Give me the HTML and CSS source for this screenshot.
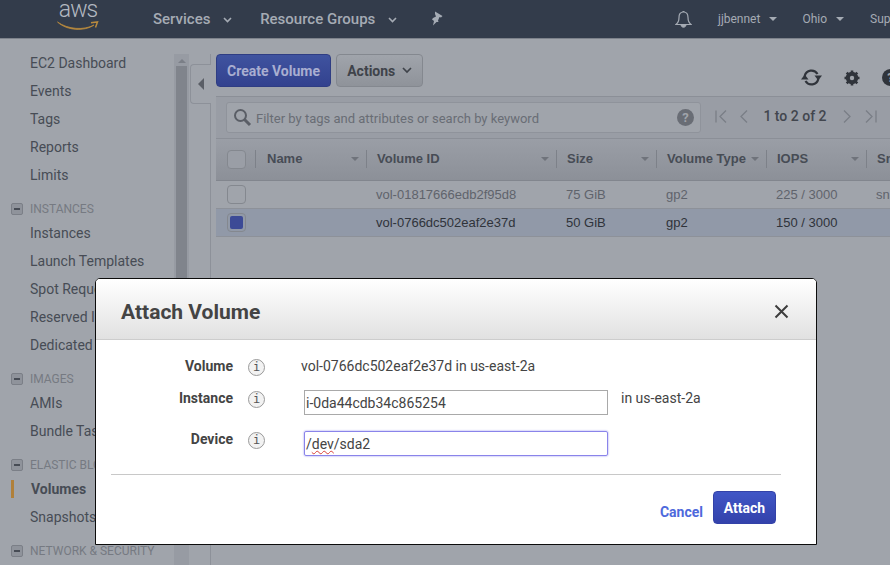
FILE: index.html
```html
<!DOCTYPE html>
<html lang="en">
<head>
  <meta charset="UTF-8">
  <title>Volumes | EC2 Management Console</title>
  <link rel="stylesheet" href="styles.css">
</head>
<body>
  <header class="topbar">
    <div class="logo">
      <span class="logo-text">aws</span>
      <svg class="logo-smile" width="42" height="10" viewBox="0 0 42 10"><path d="M0.500 1 C11 8.500 27 9.500 37 4 C28 10.500 10 10 0.500 1 Z" fill="#b98a3e" stroke="#b98a3e" stroke-width="0.800"/><path d="M34 1.800 L40.500 1 L38.500 6.500" fill="none" stroke="#b98a3e" stroke-width="1.500"/></svg>
    </div>
    <a class="nav-main nav-services">Services <svg class="chev" width="9" height="6" viewBox="0 0 9 6"><path d="M1 1 L4.500 4.500 L8 1" fill="none" stroke="#a5abb4" stroke-width="1.600"/></svg></a>
    <a class="nav-main nav-groups">Resource Groups <svg class="chev" width="9" height="6" viewBox="0 0 9 6"><path d="M1 1 L4.500 4.500 L8 1" fill="none" stroke="#a5abb4" stroke-width="1.600"/></svg></a>
    <svg class="pin" width="14" height="15" viewBox="0 0 14 15"><path d="M5 0.500 L12.500 5 L11 6.500 L9.500 6 L8 9.500 L8.500 11 L6.500 11 L3 14.500 L4 10 L2 8.500 L3 7 L6 5.500 L5 3 Z" fill="#a5abb4"/></svg>
    <svg class="bell" width="17" height="19" viewBox="0 0 17 19"><path d="M8.500 2 C5 2 4 4.500 4 7.500 C4 11 3 13 1 14.500 L16 14.500 C14 13 13 11 13 7.500 C13 4.500 12 2 8.500 2 Z" fill="none" stroke="#a5abb4" stroke-width="1.200"/><path d="M6 15 C6.500 18 10.500 18 11 15 Z M7.500 1.500 L9.500 1.500" fill="#a5abb4" stroke="#a5abb4"/></svg>
    <a class="nav-small nav-user">jjbennet <i class="caret"></i></a>
    <a class="nav-small nav-region">Ohio <i class="caret"></i></a>
    <a class="nav-small nav-support">Support</a>
  </header>

  <div class="content">
    <nav class="sidenav">
      <div class="menu">
        <a class="menu-item">EC2 Dashboard</a>
        <a class="menu-item">Events</a>
        <a class="menu-item">Tags</a>
        <a class="menu-item">Reports</a>
        <a class="menu-item">Limits</a>
        <div class="menu-head"><i class="minus"></i>INSTANCES</div>
        <a class="menu-item">Instances</a>
        <a class="menu-item">Launch Templates</a>
        <a class="menu-item">Spot Requests</a>
        <a class="menu-item">Reserved Instances</a>
        <a class="menu-item">Dedicated Hosts</a>
        <div class="menu-head"><i class="minus"></i>IMAGES</div>
        <a class="menu-item">AMIs</a>
        <a class="menu-item">Bundle Tasks</a>
        <div class="menu-head"><i class="minus"></i>ELASTIC BLOCK STORE</div>
        <a class="menu-item menu-active">Volumes</a>
        <a class="menu-item">Snapshots</a>
        <div class="menu-head"><i class="minus"></i>NETWORK &amp; SECURITY</div>
      </div>
      <div class="scrollbar">
        <div class="scroll-up"></div>
        <div class="scroll-thumb"></div>
      </div>
    </nav>

    <div class="collapse-col">
      <div class="collapse-tab"><i class="arrow-left"></i></div>
    </div>

    <main class="main">
      <div class="toolbar">
        <button class="btn btn-primary">Create Volume</button>
        <button class="btn btn-default">Actions <svg class="chev-actions" width="10" height="7" viewBox="0 0 10 7"><path d="M1 1 L5 5 L9 1" fill="none" stroke="#3f434a" stroke-width="1.700"/></svg></button>
        <div class="tool-icons">
          <svg class="tool-refresh" width="21" height="17" viewBox="0 0 21 17"><path d="M3.700 7 A7 7 0 0 1 16.500 5" fill="none" stroke="#30343b" stroke-width="2.200"/><path d="M13.500 6.500 L21 6.500 L17.300 11.500 Z" fill="#30343b"/><path d="M17.300 10 A7 7 0 0 1 4.500 12" fill="none" stroke="#30343b" stroke-width="2.200"/><path d="M0 10.500 L7.500 10.500 L3.700 5.500 Z" fill="#30343b"/></svg>
          <svg width="16" height="16" viewBox="0 0 16 16"><circle cx="8" cy="8" r="4.500" fill="none" stroke="#30343b" stroke-width="3.400"/><path d="M8 0.500 V15.500 M0.500 8 H15.500 M2.700 2.700 L13.300 13.300 M13.300 2.700 L2.700 13.300" stroke="#30343b" stroke-width="2.600"/><circle cx="8" cy="8" r="2.200" fill="#a0a4ab"/></svg>
          <span class="tool-help">?</span>
        </div>
      </div>

      <div class="filterbar">
        <div class="search">
          <svg class="search-icon" width="19" height="19" viewBox="0 0 19 19"><circle cx="7.500" cy="7.500" r="5.500" fill="none" stroke="#5a5e66" stroke-width="2"/><path d="M11.500 11.500 L17 17" stroke="#5a5e66" stroke-width="3"/></svg>
          <span class="search-text">Filter by tags and attributes or search by keyword</span>
          <span class="search-help">?</span>
        </div>
        <div class="pager">
          <svg width="12" height="13" viewBox="0 0 12 13"><path d="M1 0.500 V12.500 M11 0.500 L5 6.500 L11 12.500" fill="none" stroke="#7a7e86" stroke-width="1.300"/></svg>
          <svg class="pager-prev" width="8" height="13" viewBox="0 0 8 13"><path d="M7 0.500 L1 6.500 L7 12.500" fill="none" stroke="#7a7e86" stroke-width="1.300"/></svg>
          <span class="pager-text">1 to 2 of 2</span>
          <svg class="pager-next" width="8" height="13" viewBox="0 0 8 13"><path d="M1 0.500 L7 6.500 L1 12.500" fill="none" stroke="#7a7e86" stroke-width="1.300"/></svg>
          <svg width="12" height="13" viewBox="0 0 12 13"><path d="M11 0.500 V12.500 M1 0.500 L7 6.500 L1 12.500" fill="none" stroke="#7a7e86" stroke-width="1.300"/></svg>
        </div>
      </div>

      <div class="grid-head">
        <div class="col-check"><i class="check"></i></div>
        <div class="col col-name">Name<i class="sort"></i></div>
        <div class="col col-id">Volume ID<i class="sort"></i></div>
        <div class="col col-size">Size<i class="sort"></i></div>
        <div class="col col-type">Volume Type<i class="sort"></i></div>
        <div class="col col-iops">IOPS<i class="sort"></i></div>
        <div class="col col-snap">Snapshot</div>
      </div>
      <div class="grid-row">
        <div class="col-check"><i class="check"></i></div>
        <div class="cell col-name"></div>
        <div class="cell col-id">vol-01817666edb2f95d8</div>
        <div class="cell col-size">75 GiB</div>
        <div class="cell col-type">gp2</div>
        <div class="cell col-iops">225 / 3000</div>
        <div class="cell col-snap">snap-0</div>
      </div>
      <div class="grid-row grid-row-selected">
        <div class="col-check"><i class="check check-on"></i></div>
        <div class="cell col-name"></div>
        <div class="cell col-id">vol-0766dc502eaf2e37d</div>
        <div class="cell col-size">50 GiB</div>
        <div class="cell col-type">gp2</div>
        <div class="cell col-iops">150 / 3000</div>
        <div class="cell col-snap"></div>
      </div>
    </main>
  </div>

  <div class="modal">
    <div class="modal-head">
      <h1 class="modal-title">Attach Volume</h1>
      <svg class="modal-close" width="15" height="15" viewBox="0 0 15 15"><path d="M1.500 1.500 L13.500 13.500 M13.500 1.500 L1.500 13.500" stroke="#3d3d3d" stroke-width="2"/></svg>
    </div>
    <div class="modal-body">
      <div class="form-row form-row-volume">
        <label class="form-label">Volume</label>
        <span class="info">i</span>
        <span class="form-value">vol-0766dc502eaf2e37d in us-east-2a</span>
      </div>
      <div class="form-row form-row-instance">
        <label class="form-label">Instance</label>
        <span class="info">i</span>
        <div class="field">i-0da44cdb34c865254</div>
        <span class="form-hint">in us-east-2a</span>
      </div>
      <div class="form-row form-row-device">
        <label class="form-label">Device</label>
        <span class="info">i</span>
        <div class="field field-focus">/<span class="misspelled">dev</span>/sda2</div>
      </div>
    </div>
    <div class="modal-foot">
      <a class="cancel">Cancel</a>
      <button class="btn btn-attach">Attach</button>
    </div>
  </div>
</body>
</html>
```

FILE: styles.css
```css
* {
  box-sizing: border-box;
}

html, body {
  height: 100%;
}

body {
  margin: 0;
  overflow: hidden;
  background: #a0a4ab;
  font-family: Roboto, "Liberation Sans", sans-serif;
  font-size: 14px;
  color: #474c55;
}

button {
  font-family: inherit;
}

/* top bar */
.topbar {
  display: flex;
  align-items: center;
  height: 39px;
  background: #333c4b;
  border-bottom: 1px solid #7d828b;
  white-space: nowrap;
}

.topbar > * {
  flex: none;
}

.logo {
  position: relative;
  width: 42px;
  height: 30px;
  margin-left: 57px;
  margin-top: -8px;
}

.logo-text {
  display: block;
  font-size: 23px;
  font-weight: 300;
  letter-spacing: -1px;
  line-height: 20px;
  text-align: center;
  color: #b4b9c1;
}

.logo-smile {
  position: absolute;
  left: 0;
  top: 21px;
}

.nav-main {
  font-size: 15px;
  font-weight: 500;
  color: #a5abb4;
}

.chev {
  margin-left: 9px;
  vertical-align: 1px;
}

.nav-services {
  margin-left: 54px;
}

.nav-groups {
  margin-left: 28px;
}

.pin {
  margin-left: 33px;
  margin-top: -1px;
}

.bell {
  margin-left: 231px;
}

.nav-small {
  font-size: 12px;
  color: #a5abb4;
}

.nav-user {
  margin-left: 26px;
}

.nav-region {
  margin-left: 25px;
}

.nav-support {
  margin-left: 26px;
}

.caret {
  display: inline-block;
  width: 0;
  height: 0;
  margin-left: 6px;
  vertical-align: 2px;
  border-left: 4px solid transparent;
  border-right: 4px solid transparent;
  border-top: 4px solid #a5abb4;
}

.content {
  display: flex;
  height: 526px;
}

/* left menu */
.sidenav {
  display: flex;
  flex: none;
  width: 190px;
  overflow: hidden;
}

.menu {
  flex: none;
  width: 174px;
  padding-top: 10px;
  white-space: nowrap;
}

.menu-item {
  position: relative;
  display: block;
  height: 28px;
  padding-left: 30px;
  line-height: 28px;
  color: #474c55;
}

.menu-active {
  padding-left: 31px;
  font-weight: 700;
}

.menu-active::before {
  content: "";
  position: absolute;
  left: 11px;
  top: 5px;
  width: 3px;
  height: 18px;
  background: #b0803a;
}

.menu-head {
  display: flex;
  align-items: center;
  height: 16px;
  margin-top: 12px;
  margin-bottom: 2px;
  padding-left: 11px;
  font-size: 12px;
  line-height: 16px;
  color: #767a82;
}

.minus {
  position: relative;
  flex: none;
  width: 12px;
  height: 12px;
  margin-right: 7px;
  background: #8f939b;
  border: 1px solid #7b7f87;
  border-radius: 2px;
}

.minus::after {
  content: "";
  position: absolute;
  left: 2px;
  top: 4px;
  width: 6px;
  height: 2px;
  background: #474c55;
}

.scrollbar {
  flex: none;
  width: 15px;
  margin-top: 15px;
  padding: 0 2px;
  background: #979ba3;
}

.scroll-up {
  width: 0;
  height: 0;
  margin: 5px auto 3px;
  border-left: 4px solid transparent;
  border-right: 4px solid transparent;
  border-bottom: 4px solid #7b7f87;
}

.scroll-thumb {
  height: 470px;
  margin-top: 3px;
  background: #80848c;
}

.collapse-col {
  flex: none;
  width: 21px;
  margin-top: 15px;
  padding-top: 10px;
  border-right: 1px solid #8d9199;
}

.collapse-tab {
  display: flex;
  align-items: center;
  justify-content: center;
  width: 21px;
  height: 40px;
  background: #a0a4ab;
  border: 1px solid #8d9199;
  border-right: 0;
  border-radius: 4px 0 0 4px;
}

.arrow-left {
  width: 0;
  height: 0;
  border-top: 6px solid transparent;
  border-bottom: 6px solid transparent;
  border-right: 6px solid #5a5e66;
}

/* main */
.main {
  flex: none;
  width: 679px;
  padding-left: 5px;
  padding-top: 15px;
  overflow: hidden;
}

.toolbar {
  display: flex;
  align-items: flex-start;
  height: 42px;
}

.toolbar > * {
  flex: none;
}

.btn {
  height: 33px;
  padding: 0;
  font-size: 14px;
  font-weight: 700;
  border-radius: 4px;
}

.btn-primary {
  width: 115px;
  color: #a9aed0;
  background: linear-gradient(#3f539f, #33428f);
  border: 1px solid #2f3d83;
}

.btn-default {
  width: 87px;
  margin-left: 5px;
  color: #3f434a;
  background: linear-gradient(#a0a4ab, #8f939a);
  border: 1px solid #84888f;
}

.chev-actions {
  margin-left: 3px;
  vertical-align: 2px;
}

.tool-icons {
  display: flex;
  align-items: center;
  gap: 22px;
  margin-left: 378px;
  margin-top: 15px;
}

.tool-help {
  flex: none;
  width: 17px;
  height: 17px;
  font-size: 13px;
  font-weight: 700;
  line-height: 17px;
  text-align: center;
  color: #a0a4ab;
  background: #30343b;
  border-radius: 50%;
}

.filterbar {
  display: flex;
  align-items: flex-start;
  height: 42px;
  background: #999da5;
  border-top: 1px solid #8b8f97;
  padding: 5px 0 0 10px;
}

.search {
  display: flex;
  flex: none;
  align-items: center;
  width: 475px;
  height: 31px;
  padding: 1px 6px 0 6px;
  background: #a0a4ab;
  border: 1px solid #8f939b;
  border-radius: 3px;
}

.search-icon {
  margin-top: -2px;
}

.search-text {
  flex: 1;
  margin-left: 4px;
  font-size: 13px;
  color: #696d75;
}

.search-help {
  flex: none;
  width: 17px;
  height: 17px;
  margin-top: -2px;
  font-size: 13px;
  font-weight: 700;
  line-height: 17px;
  text-align: center;
  color: #a0a4ab;
  background: #696d75;
  border-radius: 50%;
}

.pager {
  display: flex;
  flex: none;
  align-items: center;
  height: 28px;
  margin-left: 14px;
}

.pager > * {
  flex: none;
}

.pager-prev {
  margin-left: 13px;
}

.pager-next {
  margin-left: 3px;
  margin-right: 14px;
}

.pager-text {
  width: 90px;
  margin-left: 2px;
  font-size: 14px;
  font-weight: 500;
  text-align: center;
  color: #42464e;
}

.grid-head {
  display: flex;
  align-items: center;
  height: 43px;
  background: linear-gradient(#9a9ea6, #8c9098);
  border-top: 1px solid #8b8f97;
  border-bottom: 1px solid #82868e;
  font-family: "Liberation Sans", sans-serif;
  font-size: 13px;
  font-weight: 700;
  color: #474c55;
  white-space: nowrap;
}

.grid-row {
  display: flex;
  align-items: center;
  height: 28px;
  border-bottom: 1px solid #8d9199;
  font-family: "Liberation Sans", sans-serif;
  font-size: 13px;
  color: #5f636b;
  white-space: nowrap;
}

.grid-row-selected {
  background: #9199a8;
  color: #2f333a;
}

.col-check {
  display: flex;
  flex: none;
  align-items: center;
  width: 39px;
  padding-left: 11px;
}

.check {
  display: block;
  width: 19px;
  height: 19px;
  background: #a0a4ab;
  border: 1px solid #84888f;
  border-radius: 4px;
}

.grid-head .check {
  background: #9a9ea6;
}

.check-on {
  padding: 2px;
  background: #9199a8;
}

.check-on::after {
  content: "";
  display: block;
  width: 13px;
  height: 13px;
  background: #3c4a96;
  border-radius: 2px;
}

.col {
  position: relative;
  flex: none;
  margin-top: -2px;
  padding-left: 11px;
}

.col::before {
  content: "";
  position: absolute;
  left: 0;
  top: -1px;
  width: 1px;
  height: 18px;
  background: #7d8189;
}

.col, .cell {
  line-height: 16px;
}

.cell {
  flex: none;
  padding-left: 10px;
}

.col-name {
  width: 111px;
}

.col.col-name {
  padding-left: 12px;
}

.col-id {
  width: 190px;
}

.col-size {
  width: 100px;
}

.col-type {
  width: 110px;
}

.col-iops {
  width: 100px;
}

.col-snap {
  width: 100px;
}

.sort {
  position: absolute;
  right: 7px;
  top: 6px;
  width: 0;
  height: 0;
  border-left: 4px solid transparent;
  border-right: 4px solid transparent;
  border-top: 4px solid #6f737b;
}

/* dialog */
.modal {
  position: absolute;
  left: 95px;
  top: 278px;
  width: 722px;
  height: 267px;
  background: #fff;
  border: 1px solid #0c0c0c;
  border-radius: 5px 5px 0 0;
  overflow: hidden;
}

.modal-head {
  display: flex;
  align-items: center;
  justify-content: space-between;
  height: 61px;
  padding: 5px 27px 0 25px;
  background: linear-gradient(#fff, #e1e1e1);
  border-bottom: 1px solid #cdcdcd;
}

.modal-title {
  margin: 0;
  font-size: 21px;
  font-weight: 700;
  color: #444;
}

.modal-body {
  height: 135px;
  margin: 0 35px 0 15px;
  padding-top: 18px;
  border-bottom: 1px solid #c8c8c8;
}

.form-row {
  display: flex;
  align-items: flex-start;
}

.form-row-volume {
  height: 32px;
}

.form-row-instance {
  height: 41px;
}

.form-label {
  flex: none;
  width: 122px;
  font-weight: 700;
  text-align: right;
  line-height: 17px;
  color: #444;
}

.info {
  flex: none;
  width: 17px;
  height: 17px;
  margin: 1px 36px 0 15px;
  font-family: "DejaVu Sans Mono", monospace;
  font-size: 12px;
  line-height: 15px;
  text-align: center;
  color: #555;
  background: #f2f2f2;
  border: 1px solid #999;
  border-radius: 50%;
}

.form-value {
  line-height: 17px;
  color: #444;
}

.form-row-instance .info, .form-row-device .info {
  margin-right: 39px;
}

.form-row-instance .form-hint {
  margin-left: 13px;
  line-height: 17px;
  color: #444;
}

.field {
  flex: none;
  width: 304px;
  height: 25px;
  padding-left: 1px;
  line-height: 25px;
  color: #444;
  border: 1px solid #a9a9a9;
}

.field-focus {
  border-color: #8a84ea;
  border-radius: 2px;
  box-shadow: 0 0 2px #8a84ea;
}

.misspelled {
  text-decoration: underline wavy #d8413a 1px;
}

.modal-foot {
  display: flex;
  align-items: flex-start;
  justify-content: flex-end;
  padding: 16px 40px 0 0;
}

.cancel {
  margin-top: 13px;
  font-weight: 700;
  color: #4e69dc;
}

.btn-attach {
  flex: none;
  width: 63px;
  margin-left: 10px;
  color: #fff;
  background: linear-gradient(#4056c6, #3342ab);
  border: 1px solid #3342a8;
}
```
